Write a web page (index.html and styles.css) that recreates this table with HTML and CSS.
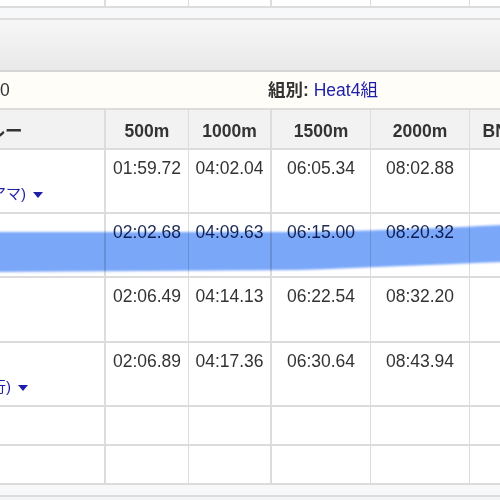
FILE: index.html
```html
<!DOCTYPE html>
<html lang="ja">
<head>
<meta charset="utf-8">
<title>結果</title>
<link rel="stylesheet" href="styles.css">
</head>
<body>
<table class="grid frag">
  <colgroup><col class="w0"><col class="w1"><col class="w2"><col class="w3"><col class="w4"><col class="w5"></colgroup>
  <tr><td class="c0"><div class="cell h6"></div></td><td><div class="cell h6"></div></td><td class="c2"><div class="cell h6"></div></td><td><div class="cell h6"></div></td><td><div class="cell h6"></div></td><td><div class="cell h6"></div></td></tr>
</table>
<div class="strip"></div>
<div class="bar"></div>
<div class="info">
  <span class="info-left"><b>レース番号:</b> 10</span>
  <span class="info-right"><b>組別:</b> <a class="link" href="#">Heat4組</a></span>
</div>
<table class="grid results">
  <colgroup><col class="w0"><col class="w1"><col class="w2"><col class="w3"><col class="w4"><col class="w5"></colgroup>
  <thead>
    <tr class="head">
      <th class="c0"><div class="cell">クルー</div></th>
      <th><div class="cell">500m</div></th>
      <th class="c2"><div class="cell">1000m</div></th>
      <th><div class="cell">1500m</div></th>
      <th><div class="cell">2000m</div></th>
      <th><div class="cell">BNo.</div></th>
    </tr>
  </thead>
  <tbody>
    <tr class="r62">
      <td class="c0"><div class="cell crew">東北大<a class="link sub" href="#">(東京医科歯科アマ)<svg class="tri" width="10" height="6" viewBox="0 0 10 6"><path d="M0 0H10L5 6Z"/></svg></a></div></td>
      <td><div class="cell">01:59.72</div></td>
      <td class="c2"><div class="cell">04:02.04</div></td>
      <td><div class="cell">06:05.34</div></td>
      <td><div class="cell">08:02.88</div></td>
      <td><div class="cell"></div></td>
    </tr>
    <tr class="r62 marked">
      <td class="c0"><div class="cell crew">一橋大</div></td>
      <td><div class="cell">02:02.68</div></td>
      <td class="c2"><div class="cell">04:09.63</div></td>
      <td><div class="cell">06:15.00</div></td>
      <td><div class="cell">08:20.32</div></td>
      <td><div class="cell"></div></td>
    </tr>
    <tr class="r63">
      <td class="c0"><div class="cell crew">東工大</div></td>
      <td><div class="cell">02:06.49</div></td>
      <td class="c2"><div class="cell">04:14.13</div></td>
      <td><div class="cell">06:22.54</div></td>
      <td><div class="cell">08:32.20</div></td>
      <td><div class="cell"></div></td>
    </tr>
    <tr class="r62">
      <td class="c0"><div class="cell crew">みずほ<a class="link sub" href="#">(みずほ信託銀行)<svg class="tri" width="10" height="6" viewBox="0 0 10 6"><path d="M0 0H10L5 6Z"/></svg></a></div></td>
      <td><div class="cell">02:06.89</div></td>
      <td class="c2"><div class="cell">04:17.36</div></td>
      <td><div class="cell">06:30.64</div></td>
      <td><div class="cell">08:43.94</div></td>
      <td><div class="cell"></div></td>
    </tr>
    <tr class="r37">
      <td class="c0"><div class="cell"></div></td><td><div class="cell"></div></td><td class="c2"><div class="cell"></div></td><td><div class="cell"></div></td><td><div class="cell"></div></td><td><div class="cell"></div></td>
    </tr>
    <tr class="r37">
      <td class="c0"><div class="cell"></div></td><td><div class="cell"></div></td><td class="c2"><div class="cell"></div></td><td><div class="cell"></div></td><td><div class="cell"></div></td><td><div class="cell"></div></td>
    </tr>
  </tbody>
</table>
<div class="strip bottom"></div>
<svg class="mark" width="500" height="500" viewBox="0 0 500 500">
  <defs><filter id="soft" x="-5%" y="-50%" width="110%" height="200%"><feGaussianBlur stdDeviation="0.8"/></filter></defs>
  <path filter="url(#soft)" d="M-5 232 L300 232 C380 231 440 228 505 225 L505 262 C430 265 360 268 300 270 L-5 272 Z"/>
</svg>
</body>
</html>
```

FILE: styles.css
```css
html, body {
  margin: 0;
  padding: 0;
}

body {
  width: 500px;
  height: 500px;
  overflow: hidden;
  position: relative;
  background: #f4f5f7;
  font-family: "Liberation Sans", "Noto Sans CJK JP", sans-serif;
  font-size: 17.5px;
  line-height: 20px;
  color: #333;
}

.grid {
  border-collapse: separate;
  border-spacing: 0;
  table-layout: fixed;
  width: 648px;
  margin-left: -111px;
  background: #fff;
}

.w0 { width: 217px; }
.w1 { width: 83px; }
.w2 { width: 83px; }
.w3 { width: 99px; }
.w4 { width: 99px; }
.w5 { width: 67px; }

.grid td,
.grid th {
  padding: 0;
  box-sizing: border-box;
  vertical-align: top;
  border-right: 1px solid #dcdcdc;
  border-bottom: 2px solid #dcdcdc;
}

.grid .c0,
.grid .c2 {
  border-right-width: 2px;
}

.cell {
  box-sizing: border-box;
  padding-top: 8px;
  text-align: center;
  white-space: nowrap;
  overflow: hidden;
}

.h6 { height: 6px; padding: 0; }

.results {
  border-top: 2px solid #dcdcdc;
}

.head th {
  background: #f2f2f2;
  font-weight: bold;
}

.head .cell {
  height: 38px;
  padding-top: 11px;
}

.r62 .cell { height: 62px; }
.r63 .cell { height: 63px; }
.r37 .cell { height: 37px; }

.crew {
  text-align: left;
  padding-left: 7px;
}

.link {
  color: #1e1ea8;
  text-decoration: none;
}

.sub {
  display: block;
  margin-top: 6px;
  font-size: 15px;
  line-height: 20px;
}

.tri {
  margin-left: 7px;
  vertical-align: 1px;
  fill: #1e1ea8;
}

.marked .cell {
  color: #1d2c55;
}

.strip {
  height: 10px;
  background: #f7f8fa;
}

.strip.bottom {
  border-bottom: 2px solid #dcdcdc;
}

.bar {
  height: 50px;
  border-top: 2px solid #dedede;
  border-bottom: 2px solid #d6d6d6;
  background: linear-gradient(#f6f6f6, #e9e9e9);
}

.info {
  display: flex;
  height: 36px;
  box-sizing: border-box;
  padding-top: 8px;
  margin-left: -111px;
  background: #fffdf8;
  white-space: nowrap;
}

.info-left {
  width: 379px;
  box-sizing: border-box;
  padding-left: 4px;
  flex: none;
}

.mark {
  position: absolute;
  top: 0;
  left: 0;
  pointer-events: none;
  mix-blend-mode: multiply;
  fill: rgb(122, 167, 248);
}
```
